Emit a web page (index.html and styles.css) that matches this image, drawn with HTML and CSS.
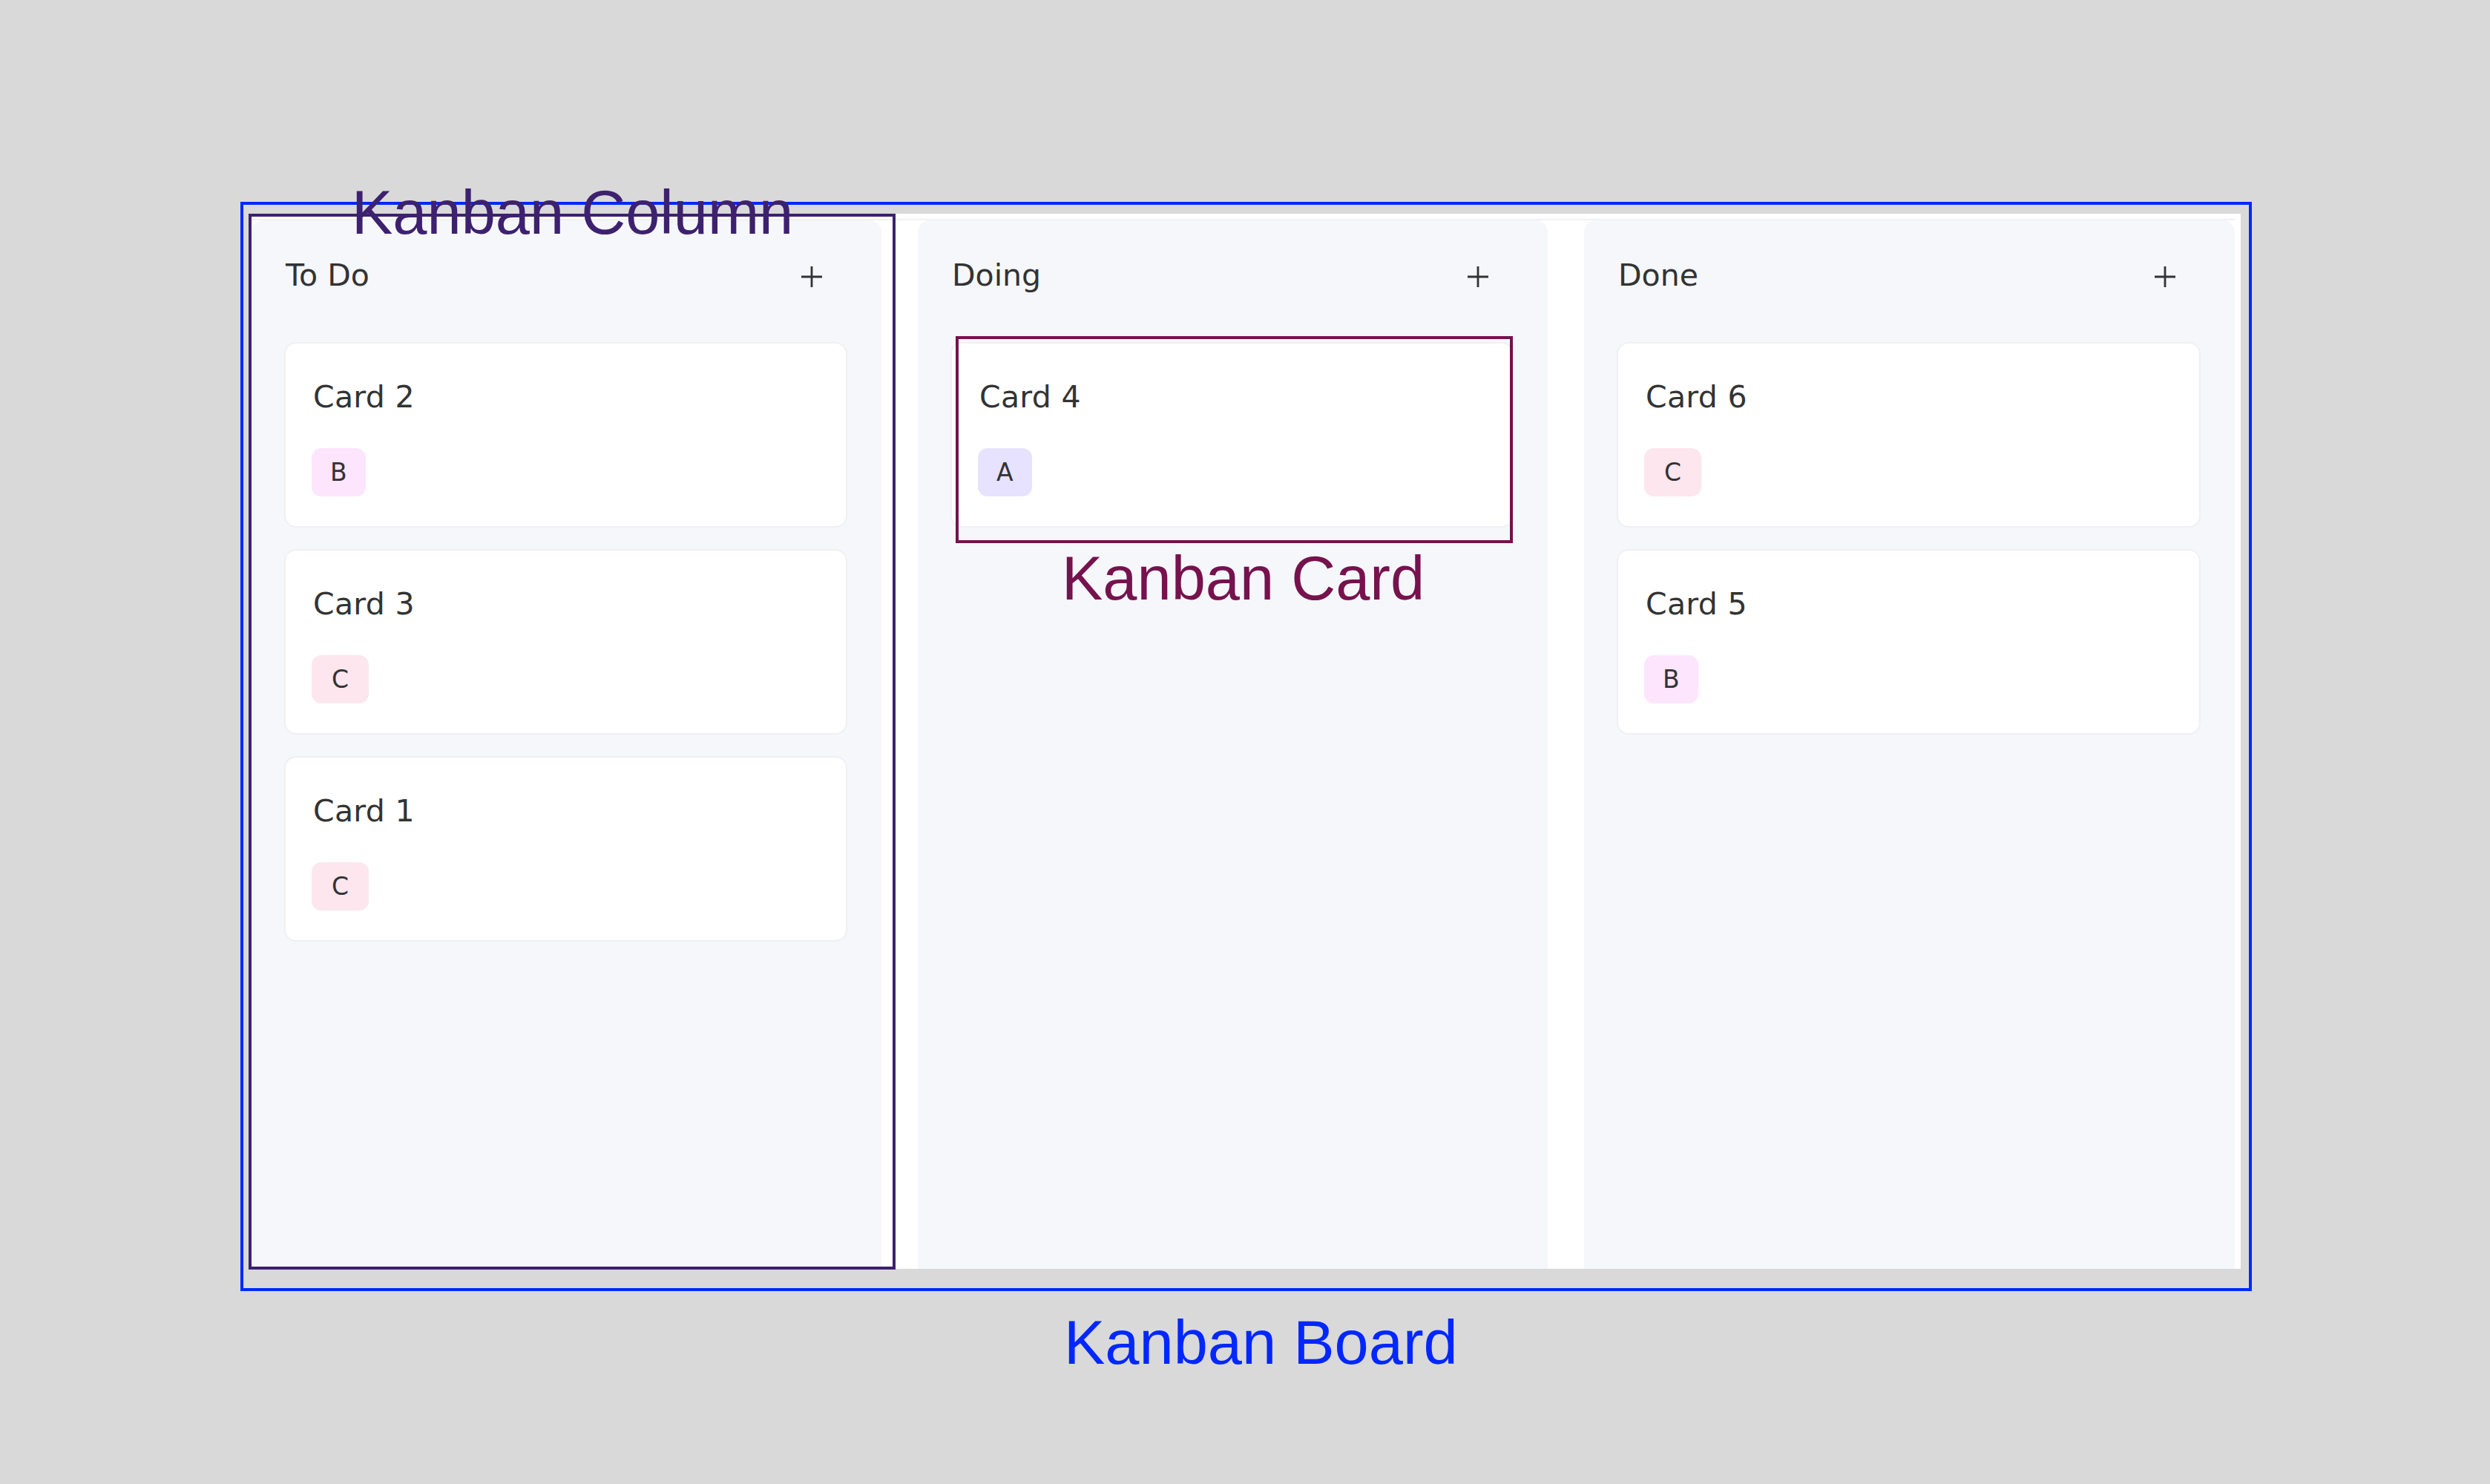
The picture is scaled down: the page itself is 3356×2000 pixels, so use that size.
FILE: index.html
```html
<!DOCTYPE html>
<html>

<head>
    <title>Kanban Board</title>
    <meta charset="utf-8">
    <meta name="viewport" content="width=device-width, initial-scale=1.0">

    <link rel="stylesheet" href="styles.css">
</head>

<body>

    <div class="stage">

        <div class="frame">
            <div class="board">
                <div class="lanes">

                    <section class="column">
                        <header class="column-head">
                            <h2>To Do</h2>
                            <button class="add" aria-label="Add card">
                                <svg width="30" height="30" viewBox="0 0 30 30"><path d="M15 1v28M1 15h28" /></svg>
                            </button>
                        </header>
                        <div class="cards">
                            <article class="card">
                                <h3>Card 2</h3>
                                <span class="tag tag-b">B</span>
                            </article>
                            <article class="card">
                                <h3>Card 3</h3>
                                <span class="tag tag-c">C</span>
                            </article>
                            <article class="card">
                                <h3>Card 1</h3>
                                <span class="tag tag-c">C</span>
                            </article>
                        </div>
                    </section>

                    <section class="column">
                        <header class="column-head">
                            <h2>Doing</h2>
                            <button class="add" aria-label="Add card">
                                <svg width="30" height="30" viewBox="0 0 30 30"><path d="M15 1v28M1 15h28" /></svg>
                            </button>
                        </header>
                        <div class="cards">
                            <article class="card">
                                <h3>Card 4</h3>
                                <span class="tag tag-a">A</span>
                            </article>
                        </div>
                    </section>

                    <section class="column">
                        <header class="column-head">
                            <h2>Done</h2>
                            <button class="add" aria-label="Add card">
                                <svg width="30" height="30" viewBox="0 0 30 30"><path d="M15 1v28M1 15h28" /></svg>
                            </button>
                        </header>
                        <div class="cards">
                            <article class="card">
                                <h3>Card 6</h3>
                                <span class="tag tag-c">C</span>
                            </article>
                            <article class="card">
                                <h3>Card 5</h3>
                                <span class="tag tag-b">B</span>
                            </article>
                        </div>
                    </section>

                </div>
            </div>
        </div>

        <!-- annotations -->
        <div class="outline outline-column"></div>
        <div class="outline outline-card"></div>
        <span class="label label-column">Kanban Column</span>
        <span class="label label-card">Kanban Card</span>
        <span class="label label-board">Kanban Board</span>

    </div>

</body>

</html>
```

FILE: styles.css
```css
body {
    margin: 0;
    background-color: #d9d9d9;
    font-family: "DejaVu Sans", "Noto Sans", sans-serif;
    color: #333333;
}

.stage {
    position: relative;
    width: 3356px;
    height: 2000px;
    padding-top: 272px;
    box-sizing: border-box;
}

/* blue board frame */
.frame {
    box-sizing: border-box;
    width: 2711px;
    height: 1468px;
    margin-left: 324px;
    border: 4px solid #0027ff;
    padding: 12px 11px 26px 8px;
}

.board {
    height: 100%;
    box-sizing: border-box;
    background-color: #ffffff;
    padding: 7px 8px 0 3px;
}

.lanes {
    height: 100%;
    box-sizing: border-box;
    border-top: 2px solid #f1f1f4;
    display: grid;
    grid-template-columns: 849px 849px 1fr;
    column-gap: 49px;
}

.column {
    background-color: #f6f7fb;
    border-radius: 16px 16px 0 0;
    padding: 44px 46px 0 44px;
}

.column-head {
    display: flex;
    align-items: center;
    justify-content: space-between;
    height: 60px;
    margin-bottom: 60px;
    padding: 0 33px 0 2px;
}

.column-head h2 {
    margin: 0;
    font-size: 41px;
    font-weight: normal;
    line-height: 60px;
    color: #333333;
}

.add {
    border: none;
    background: none;
    padding: 0;
    width: 30px;
    height: 30px;
    display: flex;
    margin-top: 3px;
}

.add path {
    stroke: #333333;
    stroke-width: 2.8;
    fill: none;
}

.cards {
    display: flex;
    flex-direction: column;
    gap: 29px;
}

.card {
    background-color: #ffffff;
    border: 2px solid #f0f0f3;
    border-radius: 16px;
    padding: 42px 35px 40px;
    display: flex;
    flex-direction: column;
    align-items: flex-start;
}

.card h3 {
    margin: 0 0 39px 2px;
    font-size: 41px;
    font-weight: normal;
    line-height: 60px;
    color: #333333;
    letter-spacing: 0.3px;
}

.tag {
    display: inline-block;
    height: 65px;
    line-height: 65px;
    padding: 0 25px;
    border-radius: 13px;
    font-size: 33px;
    color: #333333;
}

.tag-a {
    background-color: #e7e2ff;
}

.tag-b {
    background-color: #fce5fd;
}

.tag-c {
    background-color: #fde6ee;
    padding: 0 27px;
}

/* annotation outlines and labels */
.outline {
    position: absolute;
    box-sizing: border-box;
    border: 4px solid;
}

.outline-column {
    left: 335px;
    top: 288px;
    width: 872px;
    height: 1423px;
    border-color: #3d216f;
}

.outline-card {
    left: 1288px;
    top: 453px;
    width: 751px;
    height: 279px;
    border-color: #76124e;
}

.label {
    position: absolute;
    font-family: "Liberation Sans", Arial, sans-serif;
    font-size: 83px;
    line-height: 82px;
    white-space: nowrap;
}

.label-column {
    left: 474px;
    top: 246px;
    color: #3d216f;
}

.label-card {
    left: 1431px;
    top: 739px;
    color: #76124e;
}

.label-board {
    left: 1434px;
    top: 1769px;
    color: #0027ff;
}
```
